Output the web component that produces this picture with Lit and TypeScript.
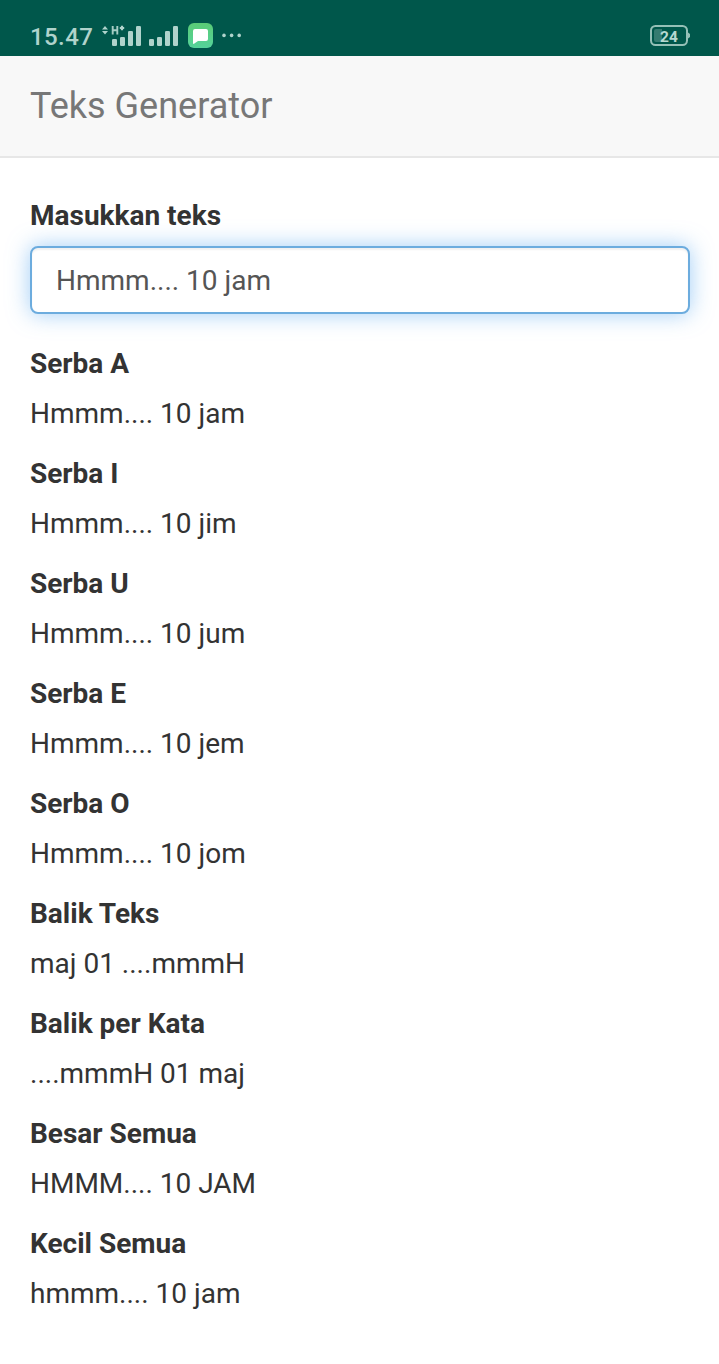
import { LitElement, html, css, svg } from "lit";
import { customElement, property, state } from "lit/decorators.js";

@customElement("status-bar")
class StatusBar extends LitElement {
  static styles = css`
    :host {
      display: flex;
      align-items: flex-start;
      justify-content: space-between;
      height: 56px;
      background: #00574b;
      color: #b0d3cc;
    }
    .left {
      display: flex;
      padding-left: 30px;
    }
    .time {
      width: 70px;
      padding-top: 23px;
      font-size: 24px;
      font-weight: 500;
      line-height: 28px;
      letter-spacing: 0.4px;
      white-space: nowrap;
    }
    svg {
      display: block;
    }
    .num {
      font: 700 15.5px Roboto, sans-serif;
    }
  `;

  private bars(x: number) {
    const tops = [39, 37, 31, 26];
    return tops.map(
      (top, i) =>
        svg`<rect x=${x + i * 8} y=${top} width="5" height=${46 - top} rx="1.3" fill="#b0d3cc"/>`
    );
  }

  render() {
    return html`
      <div class="left">
        <div class="time">15.47</div>
        <svg width="150" height="56" viewBox="100 0 150 56">
          <path d="M102 29.6L105 26L108 29.6ZM102 31L105 34.4L108 31Z" fill="#b0d3cc" />
          <path d="M112.7 26V34.4M117.3 26V34.4M112.7 30.2H117.3" stroke="#a6cdc5" stroke-width="1.9" fill="none" />
          <path d="M122 25.8V30.2M119.8 28H124.2" stroke="#b0d3cc" stroke-width="2.2" />
          ${this.bars(112)} ${this.bars(149)}
          <defs>
            <linearGradient id="g" x1="0" y1="0" x2="0" y2="1">
              <stop offset="0" stop-color="#5acb76" />
              <stop offset="1" stop-color="#55d39b" />
            </linearGradient>
          </defs>
          <rect x="188" y="23" width="25" height="25" rx="6" fill="url(#g)" />
          <path d="M195 29H206Q208 29 208 31V39Q208 41 206 41H198L194 43.8Q193 44.2 193 43V31Q193 29 195 29Z" fill="#fff" />
          <circle cx="224" cy="35.4" r="1.8" fill="#b0d3cc" />
          <circle cx="231.6" cy="35.4" r="1.8" fill="#b0d3cc" />
          <circle cx="239.2" cy="35.4" r="1.8" fill="#b0d3cc" />
        </svg>
      </div>
      <svg width="79" height="56" viewBox="640 0 79 56">
        <rect x="651" y="26" width="36" height="19" rx="4.5" fill="none" stroke="#95c0b7" stroke-width="2" />
        <path d="M688 32.5L690 34V37L688 38.5Z" fill="#95c0b7" />
        <path d="M656 29H662V42H656Q654 42 654 40V31Q654 29 656 29Z" fill="#357b70" />
        <text class="num" x="660" y="42" fill="#b5d8d1">24</text>
      </svg>
    `;
  }
}

@customElement("text-result")
class TextResult extends LitElement {
  @property() heading = "";
  @property() value = "";

  static styles = css`
    :host {
      display: flex;
      flex-direction: column;
      gap: 10px;
    }
    .heading {
      font-weight: 700;
    }
  `;

  render() {
    return html`<div class="heading">${this.heading}</div>
      <div>${this.value}</div>`;
  }
}

const reverse = (s: string) => [...s].reverse().join("");
const vowel = (v: string) => (s: string) => s.replace(/[aiueo]/g, v);

const transforms: [string, (s: string) => string][] = [
  ["Serba A", vowel("a")],
  ["Serba I", vowel("i")],
  ["Serba U", vowel("u")],
  ["Serba E", vowel("e")],
  ["Serba O", vowel("o")],
  ["Balik Teks", reverse],
  ["Balik per Kata", (s) => s.split(" ").map(reverse).join(" ")],
  ["Besar Semua", (s) => s.toUpperCase()],
  ["Kecil Semua", (s) => s.toLowerCase()],
];

@customElement("app-root")
class AppRoot extends LitElement {
  @state() private text = "Hmmm.... 10 jam";

  static styles = css`
    :host {
      display: block;
      min-height: 1364px;
      background: #fff;
      color: #333;
      font-family: Roboto, sans-serif;
      font-size: 28px;
      line-height: 40px;
    }
    .navbar {
      box-sizing: border-box;
      height: 102px;
      padding: 30px;
      background: #f8f8f8;
      border-bottom: 2px solid #e7e7e7;
      color: #777;
      font-size: 36px;
    }
    .content {
      padding: 38px 29px 0 30px;
    }
    .label {
      display: block;
      margin-bottom: 10px;
      font-weight: 700;
    }
    .field {
      display: block;
      box-sizing: border-box;
      width: 100%;
      height: 68px;
      padding: 12px 24px;
      border: 2px solid #6cacde;
      border-radius: 8px;
      outline: 0;
      background: #fff;
      box-shadow: inset 0 2px 2px rgba(0, 0, 0, 0.06), 0 0 22px rgba(102, 175, 240, 0.62);
      color: #555;
      font: inherit;
    }
    .results {
      display: flex;
      flex-direction: column;
      gap: 20px;
      margin-top: 30px;
    }
  `;

  render() {
    return html`
      <status-bar></status-bar>
      <div class="navbar">Teks Generator</div>
      <div class="content">
        <label class="label" for="source">Masukkan teks</label>
        <input
          id="source"
          class="field"
          .value=${this.text}
          @input=${(e: Event) => (this.text = (e.target as HTMLInputElement).value)}
        />
        <div class="results">
          ${transforms.map(
            ([name, fn]) => html`<text-result .heading=${name} .value=${fn(this.text)}></text-result>`
          )}
        </div>
      </div>
    `;
  }
}
